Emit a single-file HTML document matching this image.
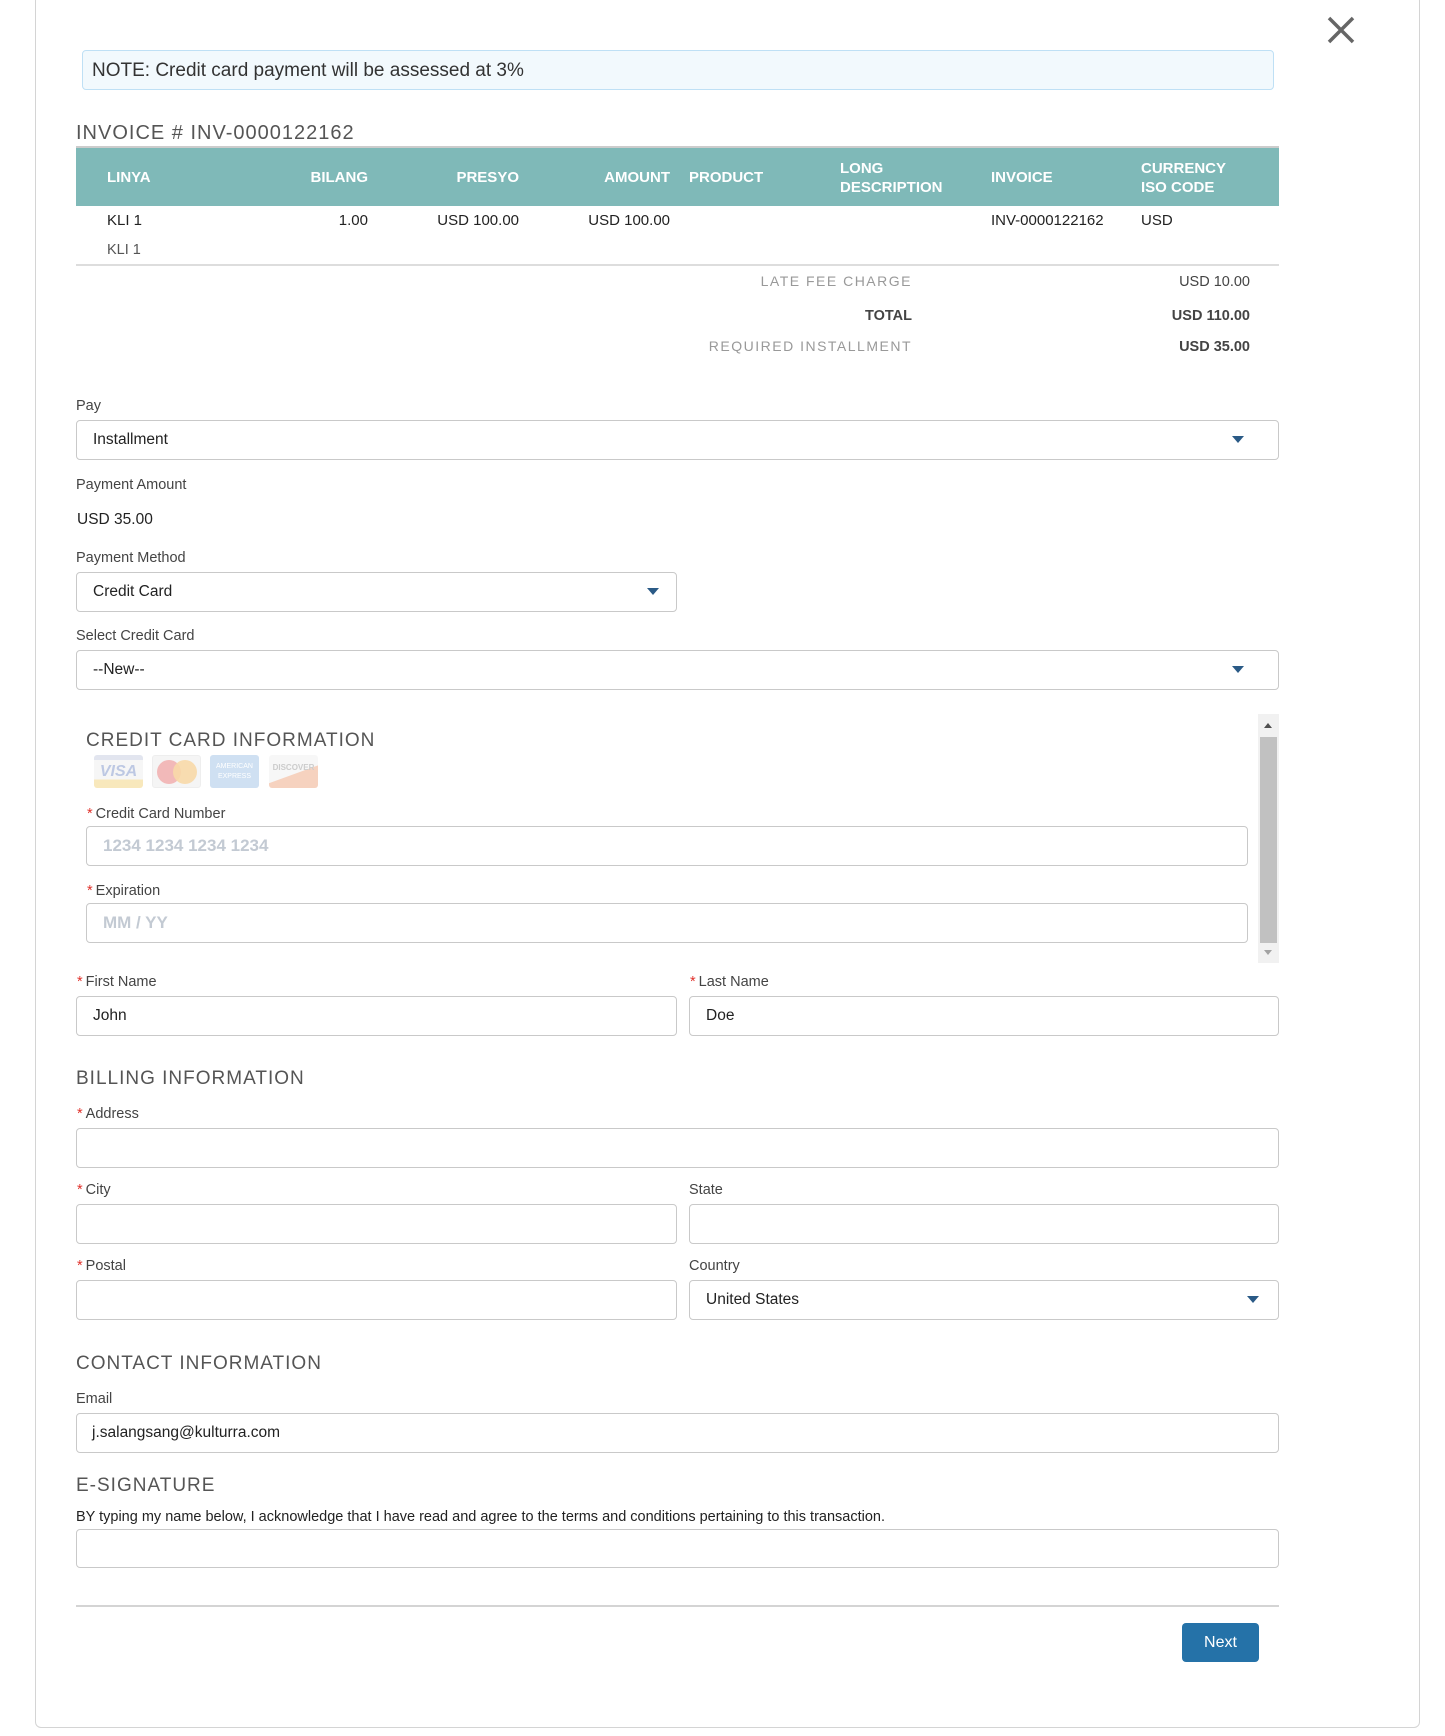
<!DOCTYPE html>
<html><head><meta charset="utf-8"><style>
*{box-sizing:border-box;margin:0;padding:0}
body{width:1445px;height:1736px;background:#fff;font-family:"Liberation Sans",sans-serif;color:#333;position:relative;overflow:hidden}
.a{position:absolute;white-space:nowrap}
.frame{position:absolute;left:35px;top:-5px;width:1385px;height:1733px;border:1px solid #d4d4d4;border-radius:6px}
.lbl{position:absolute;font-size:14.5px;color:#444}
.req{color:#e0302a;margin-right:3px}
.inp{position:absolute;border:1px solid #c9c9c9;border-radius:4px;background:#fff;font-size:15.5px;color:#222;padding-left:16px;display:flex;align-items:center}
.ph{color:#c3cad3;font-weight:bold;font-size:17px}
.caret{position:absolute;width:0;height:0;border-left:6px solid transparent;border-right:6px solid transparent;border-top:7px solid #2a5a86;top:15px}
.h{position:absolute;font-size:19px;letter-spacing:1px;color:#555}
.th{position:absolute;color:#fff;font-weight:bold;font-size:15px;line-height:19px}
.td{position:absolute;font-size:15px;color:#222}
</style></head><body>
<div class="frame"></div>
<svg class="a" style="left:1326px;top:15px" width="30" height="30" viewBox="0 0 30 30"><path d="M3 3L27 27M27 3L3 27" stroke="#666" stroke-width="3.5"/></svg>
<div class="a" style="left:82px;top:50px;width:1192px;height:40px;background:#f2f9fd;border:1px solid #bfe0f5;border-radius:4px;font-size:19px;padding:9px 0 0 9px;color:#333">NOTE: Credit card payment will be assessed at 3%</div>
<div class="h" style="left:76px;top:122px;font-size:20px">INVOICE # INV-0000122162</div>
<div class="a" style="left:76px;top:146px;width:1203px;height:60px;background:#7fb9b8;border-top:2px solid #ccc"></div>
<div class="th" style="left:107px;top:168px">LINYA</div>
<div class="th" style="left:280px;top:168px;width:88px;text-align:right">BILANG</div>
<div class="th" style="left:420px;top:168px;width:99px;text-align:right">PRESYO</div>
<div class="th" style="left:570px;top:168px;width:100px;text-align:right">AMOUNT</div>
<div class="th" style="left:689px;top:168px">PRODUCT</div>
<div class="th" style="left:840px;top:159px">LONG<br>DESCRIPTION</div>
<div class="th" style="left:991px;top:168px">INVOICE</div>
<div class="th" style="left:1141px;top:159px">CURRENCY<br>ISO CODE</div>
<div class="td" style="left:107px;top:212px">KLI 1</div>
<div class="td" style="left:280px;top:212px;width:88px;text-align:right">1.00</div>
<div class="td" style="left:400px;top:212px;width:119px;text-align:right">USD 100.00</div>
<div class="td" style="left:550px;top:212px;width:120px;text-align:right">USD 100.00</div>
<div class="td" style="left:991px;top:212px">INV-0000122162</div>
<div class="td" style="left:1141px;top:212px">USD</div>
<div class="td" style="left:107px;top:242px;color:#555;font-size:14.5px">KLI 1</div>
<div class="a" style="left:76px;top:264px;width:1203px;height:2px;background:#ddd"></div>
<div class="td" style="left:600px;top:273px;width:312px;text-align:right;color:#999;letter-spacing:1.5px;font-size:14px">LATE FEE CHARGE</div>
<div class="td" style="left:1000px;top:274px;width:250px;text-align:right;font-size:14.5px;color:#444">USD 10.00</div>
<div class="td" style="left:600px;top:308px;width:312px;text-align:right;font-weight:bold;font-size:14.5px;color:#444">TOTAL</div>
<div class="td" style="left:1000px;top:308px;width:250px;text-align:right;font-weight:bold;font-size:14.5px;color:#444">USD 110.00</div>
<div class="td" style="left:600px;top:338px;width:312px;text-align:right;color:#999;letter-spacing:1.5px;font-size:14px">REQUIRED INSTALLMENT</div>
<div class="td" style="left:1000px;top:339px;width:250px;text-align:right;font-weight:bold;font-size:14.5px;color:#444">USD 35.00</div>

<div class="lbl" style="left:76px;top:398px">Pay</div>
<div class="inp" style="left:76px;top:420px;width:1203px;height:40px">Installment<div class="caret" style="right:34px"></div></div>
<div class="lbl" style="left:76px;top:477px">Payment Amount</div>
<div class="td" style="left:77px;top:511px;font-size:15.5px">USD 35.00</div>
<div class="lbl" style="left:76px;top:550px">Payment Method</div>
<div class="inp" style="left:76px;top:572px;width:601px;height:40px">Credit Card<div class="caret" style="right:17px"></div></div>
<div class="lbl" style="left:76px;top:628px">Select Credit Card</div>
<div class="inp" style="left:76px;top:650px;width:1203px;height:40px">--New--<div class="caret" style="right:34px"></div></div>

<div class="a" style="left:1258px;top:714px;width:21px;height:249px;background:#f1f1f1"></div>
<div class="a" style="left:1260px;top:737px;width:17px;height:206px;background:#c1c1c1"></div>
<div class="a" style="left:1264px;top:723px;border-left:4px solid transparent;border-right:4px solid transparent;border-bottom:5px solid #505050"></div>
<div class="a" style="left:1264px;top:950px;border-left:4px solid transparent;border-right:4px solid transparent;border-top:5px solid #a3a3a3"></div>

<div class="h" style="left:86px;top:730px">CREDIT CARD INFORMATION</div>
<div class="a" style="left:94px;top:755px;width:49px;height:33px;border-radius:3px;background:linear-gradient(#dfe3ee 0 15%,#f6f6f6 15% 75%,#f8e6b5 75%);color:#b6c3e0;font:italic bold 16px 'Liberation Sans';text-align:center;line-height:33px;opacity:.9">VISA</div>
<div class="a" style="left:152px;top:755px;width:49px;height:33px;border-radius:3px;background:#f5f5f5;border:1px solid #eee"><div class="a" style="left:4px;top:4px;width:24px;height:24px;border-radius:50%;background:#f2b9b9"></div><div class="a" style="left:20px;top:4px;width:24px;height:24px;border-radius:50%;background:#f8d9a8;opacity:.9"></div></div>
<div class="a" style="left:210px;top:755px;width:49px;height:33px;border-radius:3px;background:#cfe0f2;color:#fff;font-size:7px;text-align:center;line-height:10px;padding-top:7px">AMERICAN<br>EXPRESS</div>
<div class="a" style="left:269px;top:755px;width:49px;height:33px;border-radius:3px;background:linear-gradient(160deg,#f7f7f7 55%,#f6d2bf 56%);color:#ccc;font-size:8px;font-weight:bold;text-align:center;padding-top:8px">DISCOVER</div>
<div class="lbl" style="left:87px;top:806px"><span class="req">*</span>Credit Card Number</div>
<div class="inp" style="left:86px;top:826px;width:1162px;height:40px"><span class="ph">1234 1234 1234 1234</span></div>
<div class="lbl" style="left:87px;top:883px"><span class="req">*</span>Expiration</div>
<div class="inp" style="left:86px;top:903px;width:1162px;height:40px"><span class="ph">MM / YY</span></div>

<div class="lbl" style="left:77px;top:974px"><span class="req">*</span>First Name</div>
<div class="inp" style="left:76px;top:996px;width:601px;height:40px">John</div>
<div class="lbl" style="left:690px;top:974px"><span class="req">*</span>Last Name</div>
<div class="inp" style="left:689px;top:996px;width:590px;height:40px">Doe</div>

<div class="h" style="left:76px;top:1068px">BILLING INFORMATION</div>
<div class="lbl" style="left:77px;top:1106px"><span class="req">*</span>Address</div>
<div class="inp" style="left:76px;top:1128px;width:1203px;height:40px"></div>
<div class="lbl" style="left:77px;top:1182px"><span class="req">*</span>City</div>
<div class="inp" style="left:76px;top:1204px;width:601px;height:40px"></div>
<div class="lbl" style="left:689px;top:1182px">State</div>
<div class="inp" style="left:689px;top:1204px;width:590px;height:40px"></div>
<div class="lbl" style="left:77px;top:1258px"><span class="req">*</span>Postal</div>
<div class="inp" style="left:76px;top:1280px;width:601px;height:40px"></div>
<div class="lbl" style="left:689px;top:1258px">Country</div>
<div class="inp" style="left:689px;top:1280px;width:590px;height:40px">United States<div class="caret" style="right:19px"></div></div>

<div class="h" style="left:76px;top:1353px">CONTACT INFORMATION</div>
<div class="lbl" style="left:76px;top:1391px">Email</div>
<div class="inp" style="left:76px;top:1413px;width:1203px;height:40px;padding-left:15px">j.salangsang@kulturra.com</div>
<div class="h" style="left:76px;top:1475px">E-SIGNATURE</div>
<div class="lbl" style="left:76px;top:1509px;color:#222">BY typing my name below, I acknowledge that I have read and agree to the terms and conditions pertaining to this transaction.</div>
<div class="inp" style="left:76px;top:1529px;width:1203px;height:39px"></div>
<div class="a" style="left:76px;top:1605px;width:1203px;height:2px;background:#d4d4d4"></div>
<div class="a" style="left:1182px;top:1623px;width:77px;height:39px;background:#2572a8;border-radius:4px;color:#fff;font-size:16px;text-align:center;line-height:39px">Next</div>
</body></html>
